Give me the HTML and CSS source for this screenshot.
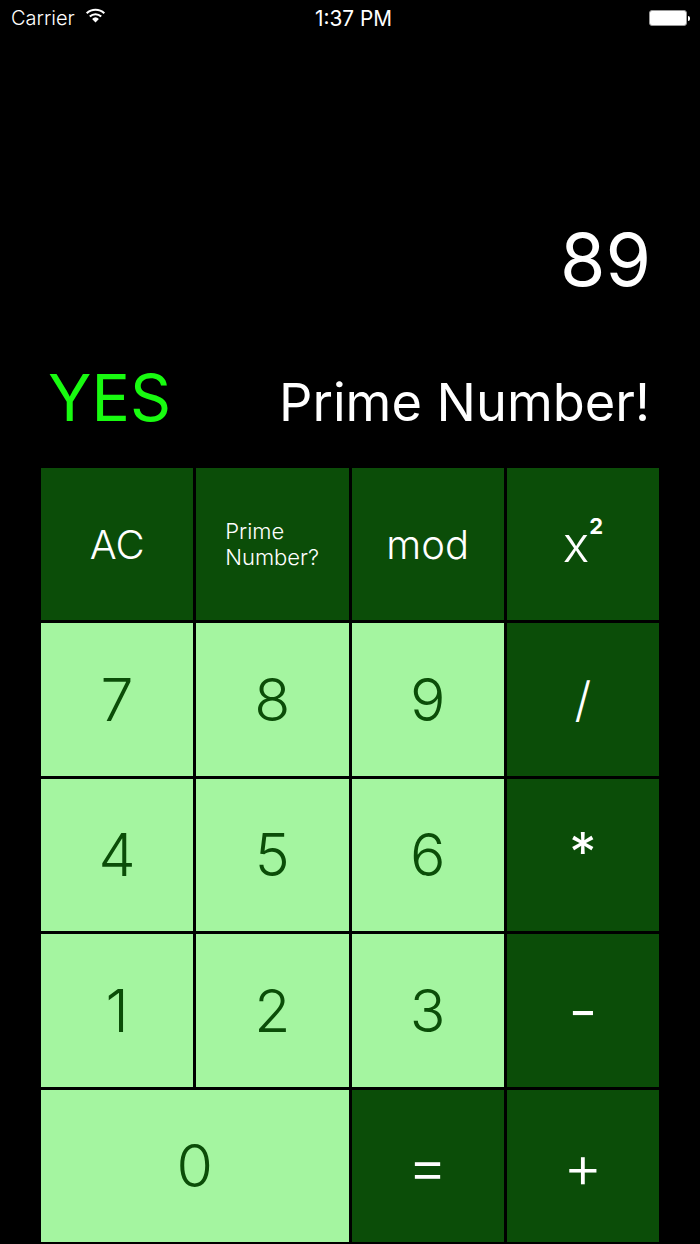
FILE: index.html
```html
<!DOCTYPE html>
<html lang="en">
<head>
  <meta charset="UTF-8">
  <meta name="viewport" content="width=device-width, initial-scale=1.0">
  <title>Calculator</title>
  <link rel="stylesheet" href="styles.css">
</head>
<body>
  <header class="status">
    <div class="status-left">
      <span>Carrier</span>
      <svg class="wifi" width="21" height="15" viewBox="0 0 20 15">
        <path d="M10 14.5 6.6 10.9a5 5 0 0 1 6.8 0z" fill="#fff"/>
        <path d="M4.3 8.5a8.4 8.4 0 0 1 11.4 0" fill="none" stroke="#fff" stroke-width="2.1"/>
        <path d="M1.2 5.2a13 13 0 0 1 17.6 0" fill="none" stroke="#fff" stroke-width="2.1"/>
      </svg>
    </div>
    <div class="status-time">1:37 PM</div>
    <div class="battery"><div class="battery-body"></div><div class="battery-tip"></div></div>
  </header>

  <div class="display">89</div>

  <div class="result">
    <span class="answer">YES</span>
    <span class="question">Prime Number!</span>
  </div>

  <main class="keys">
    <button class="key dark">AC</button>
    <button class="key dark small"><span>Prime<br>Number?</span></button>
    <button class="key dark">mod</button>
    <button class="key dark square"><span>x<sup>2</sup></span></button>
    <button class="key light">7</button>
    <button class="key light">8</button>
    <button class="key light">9</button>
    <button class="key dark slash">/</button>
    <button class="key light">4</button>
    <button class="key light">5</button>
    <button class="key light">6</button>
    <button class="key dark star">*</button>
    <button class="key light">1</button>
    <button class="key light">2</button>
    <button class="key light">3</button>
    <button class="key dark minus">-</button>
    <button class="key light wide">0</button>
    <button class="key dark equals">=</button>
    <button class="key dark plus">+</button>
  </main>
</body>
</html>
```

FILE: styles.css
```css
* {
  margin: 0;
  padding: 0;
  box-sizing: border-box;
  font-family: Inter, "Liberation Sans", sans-serif;
}
body {
  width: 700px;
  height: 1244px;
  overflow: hidden;
  background-color: #000;
  color: #fff;
}

/* status bar */
.status {
  height: 36px;
  padding: 0 10px 0 11px;
  display: flex;
  align-items: center;
  justify-content: space-between;
  font-size: 20px;
  font-weight: 300;
  position: relative;
}
.status-left {
  display: flex;
  align-items: center;
  gap: 10px;
}
.wifi {
  margin-bottom: 5px;
}
.status-time {
  position: absolute;
  left: 0;
  right: 0;
  padding-left: 7px;
  text-align: center;
  font-size: 20.8px;
  font-weight: 400;
}
.battery {
  display: flex;
  align-items: center;
  gap: 1px;
}
.battery-body {
  width: 38px;
  height: 16px;
  background-color: #fff;
  border: 1px solid #999;
  border-radius: 3px;
}
.battery-tip {
  width: 2px;
  height: 5px;
  background-color: #fff;
  border-radius: 0 2px 2px 0;
}

/* number + result */
.display {
  height: 298px;
  padding: 180px 49px 0 0;
  text-align: right;
  font-size: 73.5px;
  line-height: 88px;
}
.result {
  height: 134px;
  padding: 28px 50px 0 48px;
  display: flex;
  justify-content: space-between;
  align-items: flex-start;
}
.answer {
  color: #18fb10;
  font-size: 64px;
  line-height: 72px;
}
.question {
  font-size: 52.3px;
  line-height: 80px;
}

/* keypad */
.keys {
  margin: 0 41px;
  display: grid;
  grid-template-columns: repeat(4, 1fr);
  grid-auto-rows: 152.4px;
  gap: 3px;
}
.key {
  border: none;
  display: flex;
  align-items: center;
  justify-content: center;
  font-size: 40px;
  font-weight: 350;
}
.dark {
  background-color: #0b4d08;
  color: #fff;
}
.light {
  background-color: #a4f5a0;
  color: #0b4d08;
  font-size: 59px;
  font-weight: 350;
}
.wide {
  grid-column: span 2;
}
.small {
  justify-content: flex-start;
  padding-left: 29px;
  font-size: 22px;
  font-weight: 300;
  line-height: 26px;
  text-align: left;
}

/* operators need their own sizes, the glyphs differ a lot */
.square {
  font-size: 50px;
}
.square sup {
  font-size: 22px;
  font-weight: 700;
  line-height: 0;
  vertical-align: 28px;
}
.slash {
  font-size: 48px;
}
.star {
  font-size: 54px;
  font-weight: 400;
  padding-bottom: 6px;
}
.minus {
  font-size: 66px;
  font-weight: 350;
}
.equals {
  font-size: 62px;
  font-weight: 300;
}
.plus {
  font-size: 60px;
  font-weight: 300;
}
```
